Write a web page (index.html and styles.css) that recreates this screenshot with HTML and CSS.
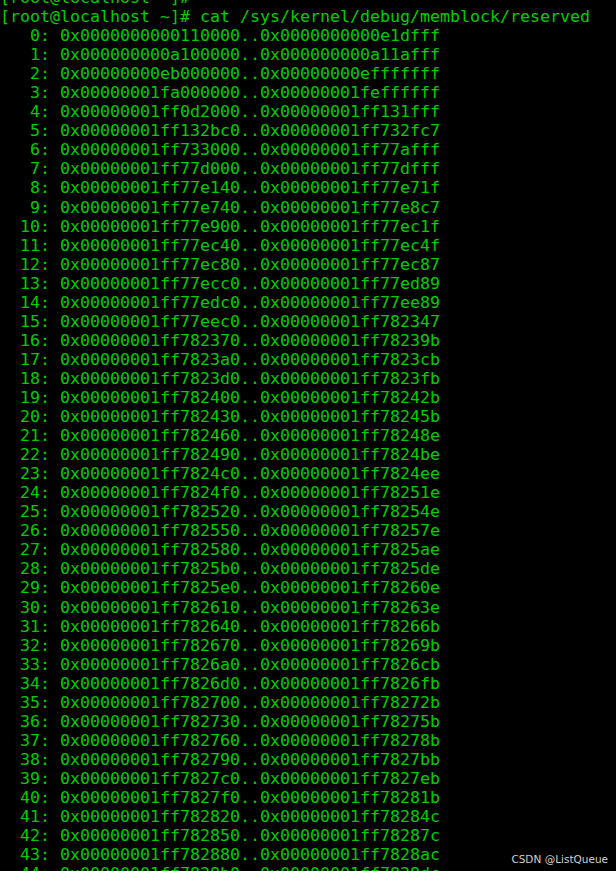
FILE: index.html
```html
<!DOCTYPE html>
<html lang="en">
<head>
<meta charset="utf-8">
<title>memblock reserved</title>
<link rel="stylesheet" href="styles.css">
</head>
<body>
<main class="term">
<pre class="out">[root@localhost ~]#
[root@localhost ~]# cat /sys/kernel/debug/memblock/reserved
   0: 0x0000000000110000..0x0000000000e1dfff
   1: 0x000000000a100000..0x000000000a11afff
   2: 0x00000000eb000000..0x00000000efffffff
   3: 0x00000001fa000000..0x00000001feffffff
   4: 0x00000001ff0d2000..0x00000001ff131fff
   5: 0x00000001ff132bc0..0x00000001ff732fc7
   6: 0x00000001ff733000..0x00000001ff77afff
   7: 0x00000001ff77d000..0x00000001ff77dfff
   8: 0x00000001ff77e140..0x00000001ff77e71f
   9: 0x00000001ff77e740..0x00000001ff77e8c7
  10: 0x00000001ff77e900..0x00000001ff77ec1f
  11: 0x00000001ff77ec40..0x00000001ff77ec4f
  12: 0x00000001ff77ec80..0x00000001ff77ec87
  13: 0x00000001ff77ecc0..0x00000001ff77ed89
  14: 0x00000001ff77edc0..0x00000001ff77ee89
  15: 0x00000001ff77eec0..0x00000001ff782347
  16: 0x00000001ff782370..0x00000001ff78239b
  17: 0x00000001ff7823a0..0x00000001ff7823cb
  18: 0x00000001ff7823d0..0x00000001ff7823fb
  19: 0x00000001ff782400..0x00000001ff78242b
  20: 0x00000001ff782430..0x00000001ff78245b
  21: 0x00000001ff782460..0x00000001ff78248e
  22: 0x00000001ff782490..0x00000001ff7824be
  23: 0x00000001ff7824c0..0x00000001ff7824ee
  24: 0x00000001ff7824f0..0x00000001ff78251e
  25: 0x00000001ff782520..0x00000001ff78254e
  26: 0x00000001ff782550..0x00000001ff78257e
  27: 0x00000001ff782580..0x00000001ff7825ae
  28: 0x00000001ff7825b0..0x00000001ff7825de
  29: 0x00000001ff7825e0..0x00000001ff78260e
  30: 0x00000001ff782610..0x00000001ff78263e
  31: 0x00000001ff782640..0x00000001ff78266b
  32: 0x00000001ff782670..0x00000001ff78269b
  33: 0x00000001ff7826a0..0x00000001ff7826cb
  34: 0x00000001ff7826d0..0x00000001ff7826fb
  35: 0x00000001ff782700..0x00000001ff78272b
  36: 0x00000001ff782730..0x00000001ff78275b
  37: 0x00000001ff782760..0x00000001ff78278b
  38: 0x00000001ff782790..0x00000001ff7827bb
  39: 0x00000001ff7827c0..0x00000001ff7827eb
  40: 0x00000001ff7827f0..0x00000001ff78281b
  41: 0x00000001ff782820..0x00000001ff78284c
  42: 0x00000001ff782850..0x00000001ff78287c
  43: 0x00000001ff782880..0x00000001ff7828ac
  44: 0x00000001ff7828b0..0x00000001ff7828dc</pre>
<div class="watermark">CSDN @ListQueue</div>
</main>
</body>
</html>
```

FILE: styles.css
```css
html, body {
  margin: 0;
  padding: 0;
  background: #000;
  height: 100%;
  overflow: hidden;
}

.term {
  position: relative;
  width: 616px;
  height: 871px;
  overflow: hidden;
  background: #000;
}

.out {
  margin: -12px 0 0 0;
  padding: 0;
  font-family: "DejaVu Sans Mono", monospace;
  font-size: 16.61px;
  line-height: 19.05px;
  color: #00cd00;
  white-space: pre;
}

.watermark {
  position: absolute;
  right: 8px;
  bottom: 6px;
  font-family: "DejaVu Sans", sans-serif;
  font-size: 10.5px;
  color: #cfcfcf;
  letter-spacing: 0;
}
```
